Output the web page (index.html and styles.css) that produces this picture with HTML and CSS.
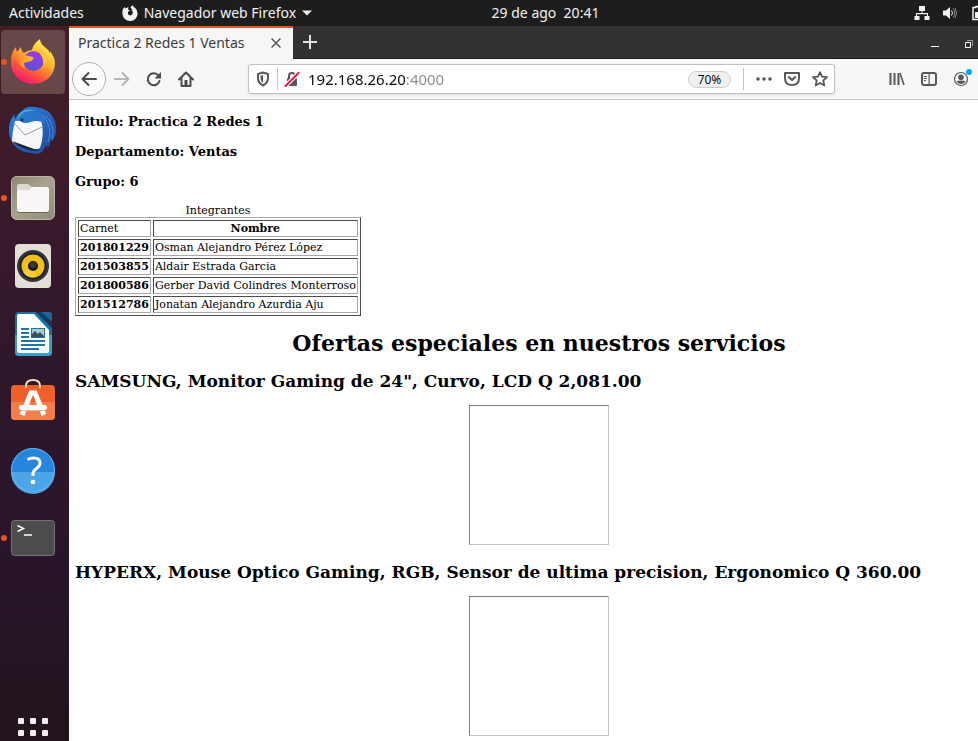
FILE: index.html
```html
<!DOCTYPE html>
<html lang="es">
<head>
<meta charset="utf-8">
<meta name="viewport" content="width=device-width, initial-scale=1">
<title>Practica 2 Redes 1 Ventas</title>
<link rel="stylesheet" href="styles.css">
</head>
<body>
<div class="desktop">
  <header class="topbar">
    <div class="topbar-left">
      <button class="top-btn">Actividades</button>
      <button class="top-btn app-menu">
        <svg width="16" height="16" viewBox="0 0 16 16" aria-hidden="true"><path fill="#f2f2f2" d="M.8 4.500L2.300 2l1 1.500L6.500 2 6 4.500l2 1L6 6.800Q5.500 10.500 8.300 10.500q2.700-.3 2.500-3Q10.500 6 9.500 5L10.500 5 8.500 2.500Q9 1 10.800.3 11 2 13 2.800 15.600 5 15.600 8.500A7.500 7.200 0 0 1 .5 9Q.2 6.500.8 4.500Z"/></svg>
        <span>Navegador web Firefox</span>
        <svg width="10" height="6" viewBox="0 0 10 6" aria-hidden="true"><path fill="#f2f2f2" d="M0 .5h10L5 5.500z"/></svg>
      </button>
    </div>
    <time class="clock">29 de ago&nbsp; 20:41</time>
    <div class="topbar-right">
      <svg width="16" height="16" viewBox="0 0 16 16" aria-label="Red" role="img"><path fill="#f2f2f2" d="M5 1h6v5H8.500v2H14v3h1.500v4h-5v-4H13V9.200H3V11h2.500v4h-5v-4H2V8h5.500V6H5z"/></svg>
      <svg width="16" height="16" viewBox="0 0 16 16" aria-label="Volumen" role="img"><path fill="#f2f2f2" d="M1 5.500h3L8 2v12l-4-3.500H1z"/><path fill="none" stroke="#f2f2f2" d="M9.500 5.500q2 2.500 0 5"/><path fill="none" stroke="#8a8a8a" d="M11 3.500q3.500 4.500 0 9M13 3q3 5 0 10"/></svg>
      <svg width="16" height="16" viewBox="0 0 16 16" aria-label="Batería" role="img"><path fill="none" stroke="#f2f2f2" stroke-width="1.500" d="M3 2.500h3v-1h4v1h3v12H3z"/><path fill="#f2f2f2" d="M5 7h6v6H5z"/></svg>
    </div>
  </header>

  <div class="workspace">
    <nav class="dock" aria-label="Aplicaciones">
      <button class="dock-item active running" aria-label="Firefox">
        <svg width="48" height="48" viewBox="0 0 48 48">
          <defs>
            <linearGradient id="fx" x1=".8" y1=".1" x2=".3" y2="1"><stop offset="0" stop-color="#fff04a"/><stop offset=".4" stop-color="#ffad2d"/><stop offset=".7" stop-color="#ff553c"/><stop offset="1" stop-color="#f0107a"/></linearGradient>
            <linearGradient id="fxg" x1=".6" y1="0" x2=".4" y2="1"><stop offset="0" stop-color="#a238e8"/><stop offset="1" stop-color="#5b50d8"/></linearGradient>
            <linearGradient id="fxh" x1="0" y1="0" x2="1" y2="0"><stop offset="0" stop-color="#ff8a25"/><stop offset="1" stop-color="#ffc02c"/></linearGradient>
          </defs>
          <path fill="url(#fx)" d="M7 9q0 3 1 5l4-5q0 4 3 6 4-3 8-3 1-6 8-11 0 5 6 9 3 2 4 6v-3q5 7 5 12A22 20.500 0 0 1 2 26Q1 16 7 9z"/>
          <circle cx="24.500" cy="23" r="10" fill="url(#fxg)"/>
          <path fill="url(#fxh)" d="M8 19q3-3 8-2 3 1 8 2 1 2-2 4-4 1-7 2 0 3 1 6-6-3-8-12z"/>
          <path fill="#ffc532" d="M23 12q8 0 12 5l-4-1q5 6 3 12 6-8 0-15-6-5-11-1z"/>
        </svg>
      </button>
      <button class="dock-item" aria-label="Thunderbird">
        <svg width="48" height="48" viewBox="0 0 48 48">
          <defs><linearGradient id="tb" x1="0" y1="0" x2="1" y2="1"><stop offset="0" stop-color="#2788d4"/><stop offset=".5" stop-color="#2b65bd"/><stop offset="1" stop-color="#1b4298"/></linearGradient></defs>
          <path fill="url(#tb)" d="M14 4q3-4 12-3 14 1 19 12 5 12-1 22l-2-1-2 7-3-1-4 6-5 2-12-2Q2 41 0 27q-1-12 6-19-1 3 0 5 3-6 8-9z"/>
          <path fill="#4aa8e4" d="M14 5q6-3 13 0-9-1-14 5l-5 4q1-6 6-9z"/>
          <path fill="#f8f8f8" d="M6 15q5-1 9 2l17-3q4 14-1 28-3 3-7 1L3 36q0-10 3-21z"/>
          <path fill="#1d2436" d="M3 35l22 8q3 1 6-1l-3 3q-6 0-11-2-9-3-14-8z"/>
          <path fill="none" stroke="#999ea5" d="M5 17l11 12 17-8"/>
          <path fill="#2876c9" d="M14 7q8-4 17 1 6 4 5 10-9-6-17-1l-6-1-4-4z"/>
          <circle cx="13" cy="14" r="1.500" fill="#162c54"/>
          <path fill="none" stroke="#458fd8" d="M33 9q12 12 6 27M37 10q10 10 6 23"/>
        </svg>
      </button>
      <button class="dock-item running" aria-label="Archivos">
        <svg width="48" height="48" viewBox="0 0 48 48">
          <defs><linearGradient id="fl" x1="0" y1="0" x2="1" y2="1"><stop offset="0" stop-color="#8c8674"/><stop offset=".5" stop-color="#aaa38f"/><stop offset="1" stop-color="#8f8977"/></linearGradient></defs>
          <rect x="2.500" y="2.500" width="43" height="43" rx="5" fill="url(#fl)" stroke="#b9b4a4"/>
          <path fill="#dcd8d0" d="M8 12q0-2 2-2h9l4 3h7v10H8z"/>
          <path fill="#6b6657" d="M8 36v1q0 2 2 2h28q2 0 2-2v-1z"/>
          <path fill="#f8f7f5" d="M8 18q0-2 2-2h9q2 0 3-2t3-1h13q2 0 2 2v21q0 2-2 2H10q-2 0-2-2z"/>
        </svg>
      </button>
      <button class="dock-item" aria-label="Rhythmbox">
        <svg width="48" height="48" viewBox="0 0 48 48">
          <rect x="6" y="2" width="36" height="44" rx="4" fill="#e3dfd5"/>
          <circle cx="24" cy="24" r="16" fill="#35363b"/><circle cx="24" cy="24" r="13.500" fill="#18202e"/>
          <circle cx="24" cy="24" r="11.500" fill="#f1bd1a"/><path fill="#ffd54d" opacity=".6" d="M24 24l-10 6a11.500 11.500 0 0 0 13 5z"/>
          <circle cx="24" cy="24" r="5" fill="#18191b"/><circle cx="24" cy="23" r="3" fill="#3a3a3a"/>
        </svg>
      </button>
      <button class="dock-item" aria-label="LibreOffice Writer">
        <svg width="48" height="48" viewBox="0 0 48 48">
          <path fill="#1772a8" d="M10 2h17l16 16v24q0 4-4 4H10q-4 0-4-4V6q0-4 4-4z"/>
          <path fill="#3aa0cf" d="M6 25h37v17q0 4-4 4H10q-4 0-4-4z"/>
          <path fill="#fff" d="M10 4h15l15 16v21q0 2-2 2H10q-2 0-2-2V6q0-2 2-2z"/>
          <path fill="#17699c" d="M32 2h9q2 0 2 2v8z"/><path fill="#0c3e61" d="M28 2l15 15v-4L32 2z"/>
          <path fill="#1b76aa" d="M12 18h8v2h-8zm0 4h8v2h-8zm0 4h8v2h-8zm0 4h24v2H12zm0 4h24v2H12zm0 4h18v2H12zM22 18h14v10H22z"/>
          <path fill="#9bd0ee" d="M23 19h12v8H23z"/><path fill="#414b52" d="M23 27v-3l3-3 3 3 2-2 4 4v1z"/><circle cx="33" cy="20.500" r="1.500" fill="#f5c129"/>
        </svg>
      </button>
      <button class="dock-item" aria-label="Ubuntu Software">
        <svg width="48" height="48" viewBox="0 0 48 48">
          <path fill="#f0602a" d="M6 7h36q4 0 4 4v27q0 4-4 4H6q-4 0-4-4V11q0-4 4-4z"/>
          <path fill="#f47d4b" d="M2 24h44v14q0 4-4 4H6q-4 0-4-4z"/>
          <path fill="none" stroke="#f2dfb9" stroke-width="2" d="M17 10V8q0-6 7-6t7 6v2"/>
          <path fill="none" stroke="#fff" stroke-width="5" d="M13 37l9-22h4l9 22"/>
          <rect x="10" y="27" width="28" height="5" rx="2.500" fill="#fff"/><path stroke="#edb49b" d="M12 32.500h24"/>
        </svg>
      </button>
      <button class="dock-item" aria-label="Ayuda">
        <svg width="48" height="48" viewBox="0 0 48 48">
          <circle cx="24" cy="24" r="22" fill="#2586dc"/><path fill="#4ba5e7" d="M2 26h44a22 22 0 0 1-44 0z"/><circle cx="24" cy="24" r="21.500" fill="none" stroke="#69b5eb"/>
          <path fill="none" stroke="#fff" stroke-width="3" d="M18.500 13.500q4-2 7.500-1.500 5 .5 5 5 0 3-3.500 5.500-3.500 2.500-3.500 5.500v2"/><circle cx="24" cy="36" r="2.300" fill="#fff"/>
        </svg>
      </button>
      <button class="dock-item running" aria-label="Terminal">
        <svg width="48" height="48" viewBox="0 0 48 48">
          <rect x="2.500" y="6.500" width="43" height="35" rx="3" fill="#4c4c4c" stroke="#747474"/>
          <path fill="none" stroke="#fff" stroke-width="1.500" d="M8.500 11.500l6 3-6 3M15 21h8"/>
        </svg>
      </button>
      <button class="apps-btn" aria-label="Mostrar aplicaciones">
        <svg width="30" height="30" viewBox="0 0 30 30"><g fill="#f2f0ef"><rect width="6" height="6" rx="1"/><rect x="12" width="6" height="6" rx="1"/><rect x="24" width="6" height="6" rx="1"/><rect y="12" width="6" height="6" rx="1"/><rect x="12" y="12" width="6" height="6" rx="1"/><rect x="24" y="12" width="6" height="6" rx="1"/><rect y="24" width="6" height="6" rx="1"/><rect x="12" y="24" width="6" height="6" rx="1"/><rect x="24" y="24" width="6" height="6" rx="1"/></g></svg>
      </button>
    </nav>

    <div class="window">
      <div class="tabs">
        <div class="tab">
          <span>Practica 2 Redes 1 Ventas</span>
          <button class="icon-btn" aria-label="Cerrar pestaña"><svg width="10" height="10" viewBox="0 0 10 10"><path stroke="#555" stroke-width="1.500" d="M.5.5l9 9m0-9l-9 9"/></svg></button>
        </div>
        <button class="icon-btn new-tab" aria-label="Nueva pestaña"><svg width="14" height="14" viewBox="0 0 14 14"><path stroke="#e4e4e4" stroke-width="2" d="M7 0v14M0 7h14"/></svg></button>
        <div class="window-controls">
          <button class="icon-btn" aria-label="Minimizar"><svg width="8" height="8" viewBox="0 0 8 8"><path fill="#fff" d="M0 6h8v1H0z"/></svg></button>
          <button class="icon-btn" aria-label="Restaurar"><svg width="8" height="8" viewBox="0 0 8 8"><path fill="none" stroke="#fff" d="M.5 2.500h5v5h-5z"/><path fill="none" stroke="#999" d="M2 .5h5.500V6"/></svg></button>
        </div>
      </div>

      <div class="toolbar">
        <button class="icon-btn back" aria-label="Atrás"><svg width="16" height="16" viewBox="0 0 16 16"><path fill="none" stroke="#4a4a4f" stroke-width="2" stroke-linecap="round" stroke-linejoin="round" d="M15 8H1.500M7.500 2l-6 6 6 6"/></svg></button>
        <button class="icon-btn" aria-label="Adelante"><svg width="16" height="16" viewBox="0 0 16 16"><path fill="none" stroke="#b5b5b7" stroke-width="2" stroke-linecap="round" stroke-linejoin="round" d="M1 8h13.500M8.500 2l6 6-6 6"/></svg></button>
        <button class="icon-btn" aria-label="Recargar"><svg width="16" height="16" viewBox="0 0 16 16"><path fill="none" stroke="#4a4a4f" stroke-width="2" stroke-linecap="round" d="M12.500 4.500A6 6 0 1 0 13.500 10"/><path fill="#4a4a4f" d="M15 1v6.500H8.500z"/></svg></button>
        <button class="icon-btn" aria-label="Inicio"><svg width="16" height="16" viewBox="0 0 16 16"><path fill="none" stroke="#4a4a4f" stroke-width="2" stroke-linecap="round" stroke-linejoin="round" d="M1 8.500L8 1.500l7 7M3.500 7.500V15h9V7.500"/><path fill="#4a4a4f" d="M6.500 9h3v6h-3z"/></svg></button>
        <div class="urlbar">
          <button class="icon-btn shield" aria-label="Protección"><svg width="14" height="16" viewBox="0 0 14 16"><path fill="none" stroke="#58585c" stroke-width="2" stroke-linejoin="round" d="M7 1.500l5 1.500v4q0 5-5 7.500Q2 12 2 7V3z"/><path fill="#58585c" d="M7 4v8Q4.500 10 4.500 7V4.700z"/></svg></button>
          <button class="icon-btn lock" aria-label="Conexión no segura"><svg width="16" height="16" viewBox="0 0 16 16"><path fill="none" stroke="#58585c" stroke-width="2" d="M5 8V5q0-3 3-3t3 3v3"/><rect x="3" y="7" width="10" height="8" rx="1" fill="#58585c"/><path stroke="#fff" stroke-width="4" d="M1.500 15L14.500 2"/><path stroke="#f01446" stroke-width="2" stroke-linecap="round" d="M1.500 15L14.500 2"/></svg></button>
          <input class="address" type="text" aria-label="Dirección" value="192.168.26.20:4000">
          <button class="zoom-level">70%</button>
          <div class="page-actions">
            <button class="icon-btn" aria-label="Más acciones"><svg width="16" height="16" viewBox="0 0 16 16"><g fill="#58585c"><circle cx="2" cy="8" r="1.800"/><circle cx="8" cy="8" r="1.800"/><circle cx="14" cy="8" r="1.800"/></g></svg></button>
            <button class="icon-btn" aria-label="Guardar en Pocket"><svg width="16" height="16" viewBox="0 0 16 16"><path fill="none" stroke="#58585c" stroke-width="2" stroke-linejoin="round" d="M1 2h14v5q0 7-7 7T1 7z"/><path fill="none" stroke="#58585c" stroke-width="2" stroke-linecap="round" stroke-linejoin="round" d="M4.800 6L8 9l3.200-3"/></svg></button>
            <button class="icon-btn" aria-label="Añadir a marcadores"><svg width="16" height="16" viewBox="0 0 16 16"><path fill="none" stroke="#58585c" stroke-width="1.800" stroke-linejoin="round" d="M8 1.200l2 4.500 5 .5-3.700 3.300 1 5L8 12l-4.300 2.500 1-5L1 6.200l5-.5z"/></svg></button>
          </div>
        </div>
        <div class="tools">
          <button class="icon-btn" aria-label="Catálogo"><svg width="16" height="16" viewBox="0 0 16 16"><path fill="none" stroke="#58585c" stroke-width="2" d="M1.500 2v12M5.500 2v12M9.500 2v12"/><path stroke="#58585c" stroke-width="1.600" d="M11 2l4 12"/></svg></button>
          <button class="icon-btn" aria-label="Barra lateral"><svg width="16" height="16" viewBox="0 0 16 16"><rect x="1" y="2" width="14" height="12" rx="2" fill="none" stroke="#58585c" stroke-width="2"/><path fill="#58585c" d="M7.500 2h1.200v12H7.500zM3 5h3v1H3zm0 2h3v1H3zm0 2h2v1H3z"/></svg></button>
          <button class="icon-btn account" aria-label="Cuenta"><svg width="16" height="16" viewBox="0 0 16 16"><circle cx="8" cy="8" r="6.500" fill="none" stroke="#58585c" stroke-width="1.200"/><circle cx="8" cy="6.200" r="2.800" fill="#58585c"/><path fill="#58585c" d="M3.500 10q4.500-1 9 0-1.500 3-4.500 3t-4.500-3z"/></svg></button>
        </div>
      </div>

      <main class="page">
        <h3>Titulo: Practica 2 Redes 1</h3>
        <h3>Departamento: Ventas</h3>
        <h3>Grupo: 6</h3>
        <table>
          <caption>Integrantes</caption>
          <thead><tr><td>Carnet</td><th scope="col">Nombre</th></tr></thead>
          <tbody>
            <tr><th scope="row">201801229</th><td>Osman Alejandro Pérez López</td></tr>
            <tr><th scope="row">201503855</th><td>Aldair Estrada Garcia</td></tr>
            <tr><th scope="row">201800586</th><td>Gerber David Colindres Monterroso</td></tr>
            <tr><th scope="row">201512786</th><td>Jonatan Alejandro Azurdia Aju</td></tr>
          </tbody>
        </table>
        <h1>Ofertas especiales en nuestros servicios</h1>
        <h2>SAMSUNG, Monitor Gaming de 24", Curvo, LCD Q 2,081.00</h2>
        <div class="photo"></div>
        <h2>HYPERX, Mouse Optico Gaming, RGB, Sensor de ultima precision, Ergonomico Q 360.00</h2>
        <div class="photo"></div>
      </main>
    </div>
  </div>
</div>
</body>
</html>
```
FILE: styles.css
```css
* {
  box-sizing: border-box;
}

body {
  margin: 0;
  overflow: hidden;
  font: 14px/20px "Noto Sans", "Open Sans", sans-serif;
}

button {
  padding: 0;
  border: 0;
  background: none;
  color: inherit;
  font: inherit;
}

svg {
  display: block;
  flex: none;
}

.desktop {
  display: flex;
  flex-direction: column;
  height: 100vh;
  overflow: hidden;
}

.topbar {
  display: grid;
  grid-template-columns: 1fr auto 1fr;
  align-items: center;
  flex: none;
  width: calc(100% + 113px);
  height: 26px;
  background: #1d1d1d;
  color: #f2f2f2;
}

.topbar-left {
  display: flex;
  gap: 38px;
  padding-left: 9px;
}

.app-menu {
  display: flex;
  align-items: center;
  gap: 6px;
}

.topbar-right {
  display: flex;
  justify-content: flex-end;
  gap: 12px;
  padding-right: 105px;
}

.workspace {
  display: flex;
  flex: 1;
  min-height: 0;
}

.dock {
  display: flex;
  flex-direction: column;
  align-items: flex-start;
  gap: 4px;
  flex: none;
  width: 69px;
  padding: 4px 1px 0;
  background: linear-gradient(#431e27, #3a1a2b 25%, #2e172b 50%, #29152b 75%, #22151d);
}

.dock-item {
  display: grid;
  place-items: center;
  position: relative;
  flex: none;
  width: 64px;
  height: 64px;
  border-radius: 4px;
}

.active {
  background: #674849;
}

.running::before {
  content: "";
  position: absolute;
  top: 29px;
  left: 0;
  width: 6px;
  height: 6px;
  border-radius: 50%;
  background: #e95420;
}

.apps-btn {
  margin: auto 0 -7px 17px;
}

.window {
  display: flex;
  flex-direction: column;
  flex: none;
  width: calc(100% - 38px);
  background: #fff;
}

.tabs {
  display: flex;
  flex: none;
  height: 33px;
  background: #343132;
  box-shadow: inset 0 -1px #1c1b1b;
}

.tab {
  display: flex;
  align-items: center;
  justify-content: space-between;
  width: 224px;
  padding: 0 12px 2px 9px;
  border-top: 2px solid #e95420;
  background: #f6f6f6;
  color: #3c3c3c;
}

.icon-btn {
  display: grid;
  place-items: center;
  flex: none;
}

.new-tab {
  padding: 0 10px 2px;
}

.window-controls {
  display: flex;
  gap: 26px;
  margin-left: auto;
  padding: 2px 36px 0 0;
}

.toolbar {
  display: flex;
  align-items: center;
  gap: 16px;
  flex: none;
  height: 41px;
  padding: 0 40px 0 3px;
  border-bottom: 1px solid #c6c6c6;
  background: #f7f7f7;
}

.back {
  width: 34px;
  height: 34px;
  margin-right: -8px;
  border: 1px solid #b1b1b1;
  border-radius: 50%;
  background: #fcfcfc;
}

.urlbar {
  display: flex;
  align-items: center;
  flex: 1;
  height: 30px;
  margin: 0 38px;
  padding: 0 6px;
  border: 1px solid #c1c1c1;
  border-radius: 3px;
  background: #fff;
  box-shadow: 0 1px 3px #0000001a;
}

.shield {
  width: 23px;
  height: 22px;
  padding-right: 7px;
  border-right: 1px solid #c4c4c4;
}

.lock {
  margin: 0 8px 0 6px;
}

/* The port is shown dimmer than the host. */
.address {
  flex: 1;
  min-width: 0;
  padding: 0;
  border: 0;
  outline: 0;
  background: linear-gradient(90deg, #0c0c0d 98px, #8a8a8a 98px);
  background-clip: text;
  color: transparent;
  font: 15px/20px "Noto Sans", "Open Sans", sans-serif;
}

.zoom-level {
  width: 43px;
  height: 17px;
  border: 1px solid #ccc;
  border-radius: 9px;
  background: #f0f0f0;
  color: #0c0c0d;
  font-size: 12px;
  line-height: 15px;
}

.page-actions {
  display: flex;
  gap: 12px;
  margin-left: 12px;
  padding: 3px 0 3px 12px;
  border-left: 1px solid #c4c4c4;
}

.tools {
  display: flex;
  gap: 16px;
}

.account {
  position: relative;
}

.account::after {
  content: "";
  position: absolute;
  top: -2px;
  right: -3px;
  width: 6px;
  height: 6px;
  border-radius: 50%;
  background: #00a9f4;
}

.page {
  flex: 1;
  min-height: 0;
  overflow: hidden;
  padding: 0 6px;
  color: #000;
  font: 11px/13px "DejaVu Serif", serif;
}

h1,
h2,
h3 {
  margin: 14px 0;
}

h3 {
  font-size: 13px;
  line-height: 16px;
}

h1 {
  font-size: 22px;
  line-height: 27px;
  text-align: center;
}

h2 {
  font-size: 17px;
  line-height: 20px;
}

table {
  border: 1px solid;
  border-color: #a9a9a9 #4b4b4b #4b4b4b #a9a9a9;
  border-spacing: 2px;
}

th,
td {
  padding: 1px;
  border: 1px solid;
  border-color: #4b4b4b #a9a9a9 #a9a9a9 #4b4b4b;
  text-align: left;
}

thead th {
  text-align: center;
}

.photo {
  width: 140px;
  height: 140px;
  margin: 14px auto 17px;
  border: 1px solid;
  border-color: #808080 #c3c3c3 #c3c3c3 #808080;
}
```
